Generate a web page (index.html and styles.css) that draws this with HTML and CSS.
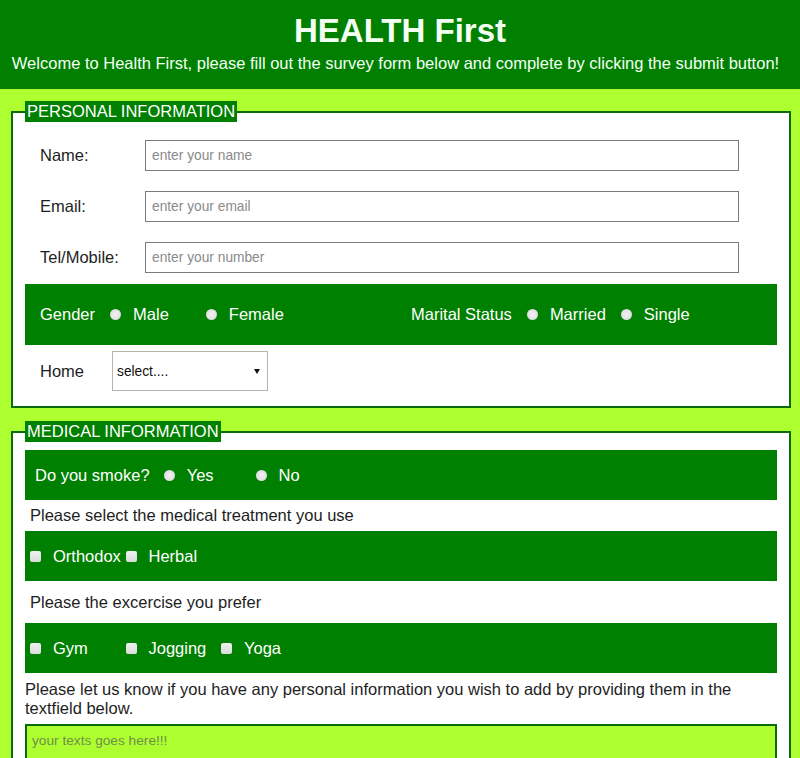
FILE: index.html
```html
<!DOCTYPE html>
<html>
<head>
<meta charset="utf-8">
<title>HEALTH First</title>
<link rel="stylesheet" href="styles.css">
</head>
<body>
<header class="top">
  <h1 class="title">HEALTH First</h1>
  <p class="intro">Welcome to Health First, please fill out the survey form below and complete by clicking the submit button!</p>
</header>
<form class="survey">
  <fieldset class="box">
    <legend class="tag">PERSONAL INFORMATION</legend>
    <div class="row first">
      <label class="lbl">Name:</label>
      <input class="txt" type="text" placeholder="enter your name">
    </div>
    <div class="row">
      <label class="lbl">Email:</label>
      <input class="txt" type="email" placeholder="enter your email">
    </div>
    <div class="row">
      <label class="lbl">Tel/Mobile:</label>
      <input class="txt" type="tel" placeholder="enter your number">
    </div>
    <div class="bar tall">
      <div class="grp">
        <span class="cap">Gender</span>
        <input class="rad" type="radio" name="g"><span class="opt">Male</span>
        <input class="rad wide" type="radio" name="g"><span class="opt">Female</span>
      </div>
      <div class="grp">
        <span class="cap">Marital Status</span>
        <input class="rad" type="radio" name="m"><span class="opt">Married</span>
        <input class="rad" type="radio" name="m"><span class="opt">Single</span>
      </div>
    </div>
    <div class="home">
      <label class="hlbl">Home</label>
      <div class="selwrap">
        <select class="sel">
          <option>select....</option>
          <option>Rented</option>
          <option>Owned</option>
        </select>
      </div>
    </div>
  </fieldset>

  <fieldset class="box second">
    <legend class="tag">MEDICAL INFORMATION</legend>
    <div class="bar smoke">
      <span class="cap">Do you smoke?</span>
      <input class="rad" type="radio" name="s"><span class="opt">Yes</span>
      <input class="rad far" type="radio" name="s"><span class="opt">No</span>
    </div>
    <p class="note">Please select the medical treatment you use</p>
    <div class="bar checks">
      <span class="chk"><input class="box-in" type="checkbox"><span class="opt">Orthodox</span></span>
      <span class="chk"><input class="box-in" type="checkbox"><span class="opt">Herbal</span></span>
    </div>
    <p class="note two">Please the excercise you prefer</p>
    <div class="bar checks">
      <span class="chk"><input class="box-in" type="checkbox"><span class="opt">Gym</span></span>
      <span class="chk"><input class="box-in" type="checkbox"><span class="opt">Jogging</span></span>
      <span class="chk"><input class="box-in" type="checkbox"><span class="opt">Yoga</span></span>
    </div>
    <p class="long">Please let us know if you have any personal information you wish to add by providing them in the textfield below.</p>
    <textarea class="area" placeholder="your texts goes here!!!"></textarea>
  </fieldset>
</form>
</body>
</html>
```

FILE: styles.css
```css
html, body {
  margin: 0;
  padding: 0;
}
body {
  background: #adff2f;
  font-family: "Liberation Sans", Arial, sans-serif;
  color: #1e1e1e;
}
.top {
  background: #007f00;
  color: #f4fff4;
  text-align: center;
  padding: 12px 0 16px;
}
.title {
  margin: 0;
  font-size: 33px;
  line-height: 37px;
  font-weight: bold;
}
.intro {
  margin: 5px 0 0;
  padding-right: 9px;
  font-size: 16.5px;
  line-height: 19px;
}
.survey {
  margin: 0;
  padding: 0;
}
.box {
  margin: 12px 9px 0 11px;
  padding: 0 12px 15px;
  border: 2px solid #0b6b0b;
  background: #ffffff;
  min-width: 0;
}
.box.second {
  margin-top: 13px;
  padding-bottom: 40px;
}
.tag {
  background: #008000;
  color: #ffffff;
  font-size: 16.5px;
  line-height: 19px;
  padding: 1px 2px;
}
.row {
  display: flex;
  align-items: center;
  margin-top: 20px;
  height: 31px;
}
.row.first {
  margin-top: 18px;
}
.lbl {
  width: 120px;
  padding-left: 15px;
  box-sizing: border-box;
  font-size: 16.5px;
}
.txt {
  width: 594px;
  height: 31px;
  box-sizing: border-box;
  border: 1px solid #7a7a7a;
  padding: 0 6px;
  font-family: "Liberation Sans", Arial, sans-serif;
  font-size: 13.75px;
  background: #fff;
}
.txt::placeholder {
  color: #8a8a8a;
}
.bar {
  background: #008000;
  color: #ffffff;
  font-size: 16.5px;
  display: flex;
  align-items: center;
}
.bar.tall {
  margin-top: 11px;
  height: 61px;
  padding-left: 15px;
  display: grid;
  grid-template-columns: 371px 1fr;
  align-items: center;
}
.grp {
  display: flex;
  align-items: center;
}
.rad {
  -webkit-appearance: none;
  appearance: none;
  width: 11px;
  height: 11px;
  border-radius: 50%;
  background: radial-gradient(circle, #f2f2f2 0, #e2e0e4 60%, #c9c9c9 100%);
  margin: 0 12px 0 15px;
  flex: none;
}
.rad.wide {
  margin-left: 37px;
}
.rad.far {
  margin-left: 42px;
}
.home {
  display: flex;
  align-items: center;
  margin-top: 6px;
}
.hlbl {
  width: 87px;
  padding-left: 15px;
  box-sizing: border-box;
  font-size: 16.5px;
}
.selwrap {
  position: relative;
  width: 156px;
  height: 40px;
}
.selwrap::after {
  content: "";
  position: absolute;
  right: 8px;
  top: 18px;
  border-left: 3px solid transparent;
  border-right: 3px solid transparent;
  border-top: 5px solid #111;
  pointer-events: none;
}
.sel {
  -webkit-appearance: none;
  appearance: none;
  width: 156px;
  height: 40px;
  box-sizing: border-box;
  border: 1px solid #b4b4b4;
  background: #fff;
  padding: 0 4px;
  font-family: "Liberation Sans", Arial, sans-serif;
  font-size: 13.75px;
  color: #111;
}
.bar.smoke {
  margin-top: 8px;
  height: 50px;
  padding-left: 10px;
}
.smoke .rad:first-of-type {
  margin-left: 14px;
}
.note {
  margin: 6px 0 6px 5px;
  font-size: 16.5px;
  line-height: 19px;
}
.note.two {
  margin: 12px 0 11px 5px;
}
.bar.checks {
  height: 50px;
  padding-left: 5px;
}
.chk {
  display: flex;
  align-items: center;
  width: 95.5px;
  flex: none;
}
.box-in {
  -webkit-appearance: none;
  appearance: none;
  width: 11px;
  height: 11px;
  border-radius: 2px;
  background: linear-gradient(#f0f0f0, #dcdcdc);
  margin: 0 12px 0 0;
  flex: none;
}
.long {
  margin: 7px 0 6px;
  font-size: 16.5px;
  line-height: 19px;
}
.area {
  display: block;
  width: 100%;
  height: 100px;
  box-sizing: border-box;
  border: 2px solid #0b6b0b;
  background: #adff2f;
  padding: 7px 5px;
  font-family: "Liberation Sans", Arial, sans-serif;
  font-size: 13.7px;
  resize: none;
}
.area::placeholder {
  color: #6f8f4a;
}
```
